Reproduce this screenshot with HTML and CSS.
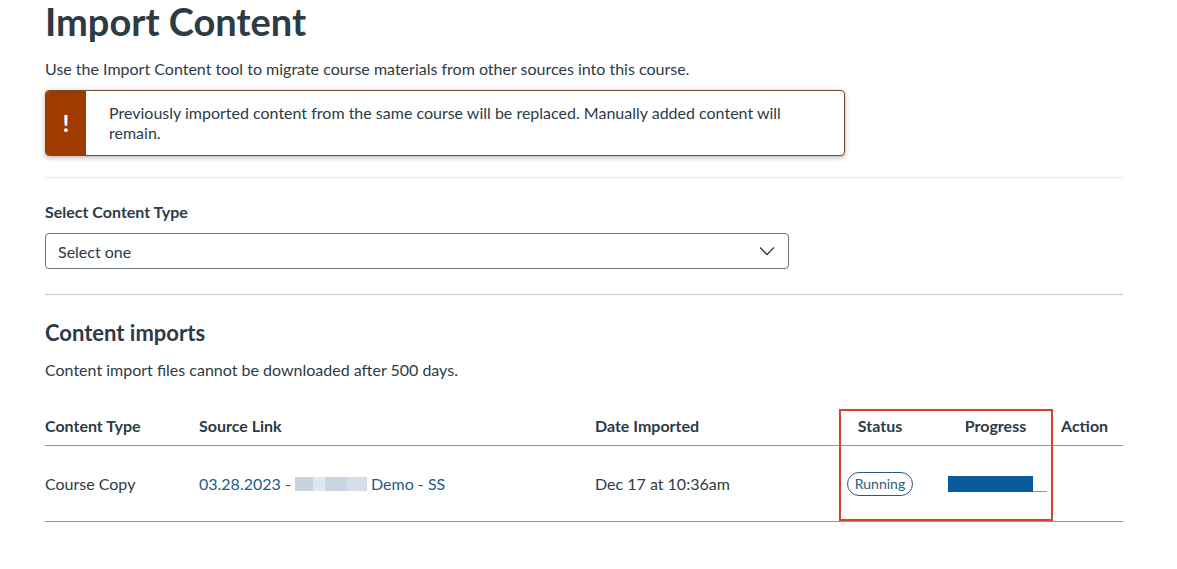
FILE: index.html
```html
<!DOCTYPE html>
<html lang="en">
<head>
  <meta charset="UTF-8">
  <meta name="viewport" content="width=device-width, initial-scale=1.0">
  <title>Import Content</title>
  <link rel="stylesheet" href="styles.css">
</head>
<body>
  <div class="container">
    <h1>Import Content</h1>
    <p class="intro">Use the Import Content tool to migrate course materials from other sources into this course.</p>

    <div class="alert">
      <div class="alert-icon">!</div>
      <div class="alert-text">Previously imported content from the same course will be replaced. Manually added content will remain.</div>
    </div>

    <hr class="divider light">

    <label class="field-label" for="content-type">Select Content Type</label>
    <div class="select">
      <span>Select one</span>
      <svg class="chevron" width="16" height="10" viewBox="0 0 16 10">
        <polyline points="1,1.5 8,8.5 15,1.5" fill="none" stroke="#2d3b45" stroke-width="1.3"/>
      </svg>
    </div>

    <hr class="divider">

    <h2>Content imports</h2>
    <p class="note">Content import files cannot be downloaded after 500 days.</p>

    <div class="table-wrap">
      <table class="imports">
        <colgroup>
          <col class="c-type">
          <col class="c-source">
          <col class="c-date">
          <col class="c-status">
          <col class="c-progress">
          <col class="c-action">
        </colgroup>
        <thead>
          <tr>
            <th>Content Type</th>
            <th>Source Link</th>
            <th>Date Imported</th>
            <th class="center">Status</th>
            <th class="center">Progress</th>
            <th>Action</th>
          </tr>
        </thead>
        <tbody>
          <tr>
            <td>Course Copy</td>
            <td><a href="#" class="link">03.28.2023 - <span class="blur"></span> Demo - SS</a></td>
            <td>Dec 17 at 10:36am</td>
            <td class="center"><span class="pill">Running</span></td>
            <td>
              <div class="progress"><div class="progress-fill" style="width: 86%"></div></div>
            </td>
            <td></td>
          </tr>
        </tbody>
      </table>
      <div class="highlight"></div>
    </div>
  </div>
</body>
</html>
```

FILE: styles.css
```css
body {
  font-family: Lato, "Open Sans", sans-serif;
  color: #2d3b45;
  background-color: #fff;
  margin: 0;
  padding: 0;
}

.container {
  width: 1078px;
  padding-left: 45px;
}

h1 {
  font-size: 38px;
  font-weight: 700;
  line-height: 42px;
  margin: 0;
}

.intro {
  font-size: 16px;
  line-height: 22px;
  margin: 16px 0 0;
}

.alert {
  display: flex;
  width: 798px;
  margin-top: 10px;
  border: 1px solid #6e4a33;
  border-radius: 4px;
  background-color: #fff;
  box-shadow: 0 2px 5px rgba(0, 0, 0, 0.22), 0 0 5px rgba(200, 90, 30, 0.15);
  overflow: hidden;
}

.alert-icon {
  width: 40px;
  flex-shrink: 0;
  background-color: #9e3b00;
  color: #fff;
  font-weight: 900;
  font-size: 22px;
  display: flex;
  align-items: center;
  justify-content: center;
}

.alert-text {
  font-size: 16px;
  line-height: 20px;
  padding: 12px 40px 12px 23px;
}

.divider {
  border: none;
  border-top: 1px solid #c7cdd1;
  margin: 0;
}

.divider.light {
  border-top-color: #e6e9eb;
  margin-top: 21px;
}

.field-label {
  display: block;
  font-size: 16px;
  font-weight: 700;
  line-height: 22px;
  margin-top: 23px;
}

.select {
  display: flex;
  align-items: center;
  justify-content: space-between;
  width: 718px;
  height: 34px;
  margin-top: 10px;
  padding: 0 12px;
  border: 1px solid #6b7780;
  border-radius: 4px;
  font-size: 16px;
  margin-bottom: 25px;
}

.chevron {
  margin-right: 1px;
}

h2 {
  font-size: 22px;
  font-weight: 700;
  line-height: 28px;
  margin: 24px 0 0;
}

.note {
  font-size: 16px;
  line-height: 22px;
  margin: 12px 0 0;
}

.table-wrap {
  position: relative;
  margin-top: 28px;
}

.imports {
  width: 100%;
  table-layout: fixed;
  border-collapse: collapse;
  font-size: 16px;
}

.c-type { width: 154px; }
.c-source { width: 396px; }
.c-date { width: 235px; }
.c-status { width: 100px; }
.c-progress { width: 131px; }

.imports th {
  text-align: left;
  font-weight: 700;
  line-height: 22px;
  padding: 6px 0 8px;
  border-bottom: 1px solid #8b969e;
}

.imports td {
  line-height: 22px;
  padding: 26px 0 25px;
  border-bottom: 1px solid #8b969e;
  vertical-align: middle;
}

.imports .center {
  text-align: center;
}

.link {
  color: #1d5b8a;
  text-decoration: none;
}

.blur {
  display: inline-block;
  width: 72px;
  height: 14px;
  vertical-align: -1px;
  background: linear-gradient(90deg, #c5d3e0 0, #c5d3e0 18px, #dfe6ee 18px, #dfe6ee 30px, #c9d5e2 30px, #c9d5e2 52px, #d6dfe9 52px);
}

.pill {
  display: inline-block;
  font-size: 14px;
  line-height: 20px;
  padding: 1px 7px;
  border: 1px solid #2d5b7e;
  border-radius: 12px;
  color: #2d5b7e;
}

.progress {
  width: 99px;
  height: 16px;
  margin-left: 18px;
  border-bottom: 1px solid #8b969e;
  box-sizing: border-box;
}

.progress-fill {
  height: 16px;
  background-color: #0b5a9c;
}

.highlight {
  position: absolute;
  left: 794px;
  top: 0;
  width: 210px;
  height: 108px;
  border: 2px solid #d9412e;
  pointer-events: none;
}
```
